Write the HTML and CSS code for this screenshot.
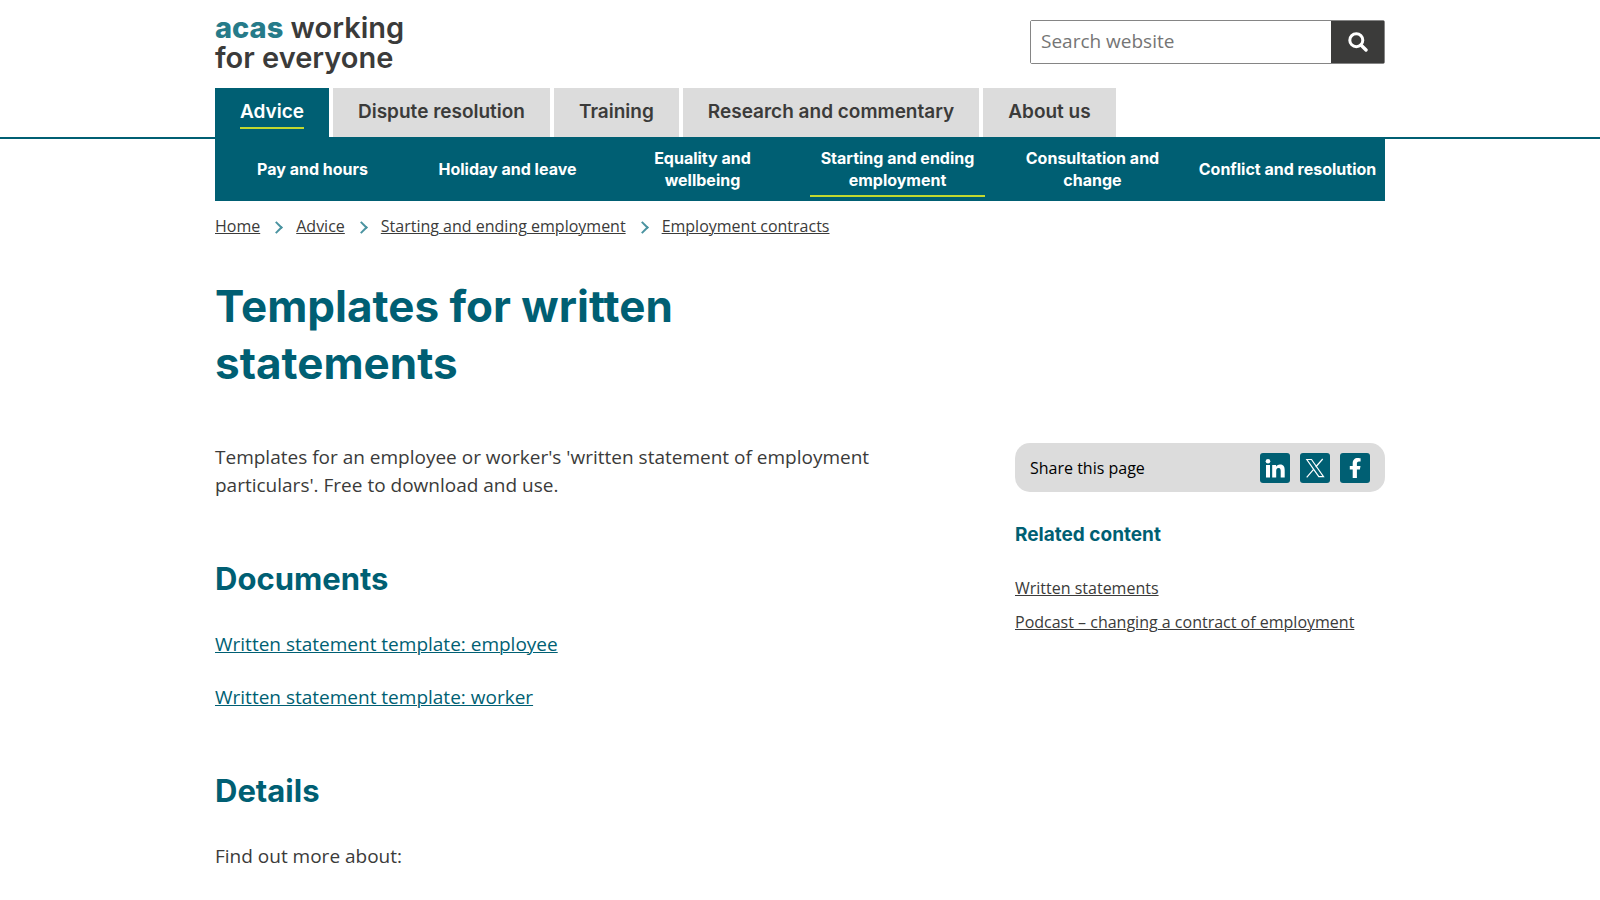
FILE: index.html
```html
<!DOCTYPE html>
<html lang="en">
  <head>
    <meta charset="UTF-8">
    <meta name="viewport" content="width=device-width, initial-scale=1.0">
    <title>Templates for written statements | Acas</title>
    <link rel="stylesheet" href="styles.css">
  </head>
  <body>
    <header class="site-header">
      <div class="container header-top">
        <a href="#" class="logo"><strong>acas</strong> working<br>for everyone</a>
        <form class="search" role="search">
          <input type="search" class="search-input" placeholder="Search website" aria-label="Search website">
          <button type="submit" class="search-button" aria-label="Search">
            <svg viewBox="0 0 20 20" width="20" height="20" fill="none" stroke="#fff">
              <circle cx="8.3" cy="8.2" r="6.5" stroke-width="3" />
              <path d="M13 13l5 5" stroke-width="3.4" stroke-linecap="round" />
            </svg>
          </button>
        </form>
      </div>

      <nav class="container tabs" aria-label="Main">
        <a href="#" class="tab active"><span>Advice</span></a>
        <a href="#" class="tab"><span>Dispute resolution</span></a>
        <a href="#" class="tab"><span>Training</span></a>
        <a href="#" class="tab"><span>Research and commentary</span></a>
        <a href="#" class="tab"><span>About us</span></a>
      </nav>
    </header>

    <nav class="container subnav" aria-label="Advice">
      <a href="#">Pay and hours</a>
      <a href="#">Holiday and leave</a>
      <a href="#">Equality and wellbeing</a>
      <a href="#" class="active">Starting and ending employment</a>
      <a href="#">Consultation and change</a>
      <a href="#">Conflict and resolution</a>
    </nav>

    <div class="container">
      <nav aria-label="Breadcrumb">
        <ol class="breadcrumb">
          <li><a href="#">Home</a></li>
          <li><a href="#">Advice</a></li>
          <li><a href="#">Starting and ending employment</a></li>
          <li><a href="#">Employment contracts</a></li>
        </ol>
      </nav>

      <h1>Templates for written statements</h1>

      <div class="columns">
        <main>
          <p>Templates for an employee or worker's 'written statement of employment particulars'. Free to download and use.</p>

          <h2>Documents</h2>
          <p><a href="#">Written statement template: employee</a></p>
          <p><a href="#">Written statement template: worker</a></p>

          <h2>Details</h2>
          <p>Find out more about:</p>
        </main>

        <aside>
          <div class="share">
            <span>Share this page</span>
            <div class="share-links">
              <a href="#" aria-label="Share on LinkedIn">
                <svg viewBox="0 0 30 30" width="30" height="30" fill="#fff">
                  <circle cx="8" cy="8.2" r="2.3" />
                  <path d="M6 12h4v12.500H6zM12.200 12H16v1.700c.6-1.100 2-2.100 4-2.100 3.900 0 4.700 2.500 4.700 5.900v7h-4v-6.200c0-1.500 0-3.400-2.100-3.400s-2.400 1.600-2.400 3.300v6.300h-4z" />
                </svg>
              </a>
              <a href="#" aria-label="Share on X">
                <svg viewBox="0 0 30 30" width="30" height="30" fill="none" stroke="#fff">
                  <path d="M6.800 6.500h4.700l12 17.200h-4.700zM22.700 6l-7 8M13.600 16.300l-6.900 8" stroke-width="1.200" />
                </svg>
              </a>
              <a href="#" aria-label="Share on Facebook">
                <svg viewBox="0 0 30 30" width="30" height="30" fill="#fff">
                  <path d="M12.700 25v-8.500H9.800V13h2.900v-2.800C12.700 7 14.600 5 17.700 5c1.400 0 2.900.3 2.900.3v3.200H19c-1.600 0-2.100 1-2.100 2V13h3.600l-.6 3.500h-3V25z" />
                </svg>
              </a>
            </div>
          </div>

          <h3>Related content</h3>
          <ul class="related">
            <li><a href="#">Written statements</a></li>
            <li><a href="#">Podcast – changing a contract of employment</a></li>
          </ul>
        </aside>
      </div>
    </div>
  </body>
</html>
```

FILE: styles.css
```css
* {
  box-sizing: border-box;
}

body {
  margin: 0;
  background: #fff;
  color: #3b3b3a;
  font-family: "Open Sans", sans-serif;
  font-size: 19px;
  line-height: 28px;
}

a {
  color: #005f73;
  text-underline-offset: 1px;
  text-decoration-thickness: 1px;
}

.container {
  width: 100%;
  max-width: 1170px;
  margin: 0 auto;
}

.site-header {
  border-bottom: 2px solid #005f73;
}

.header-top {
  display: flex;
  justify-content: space-between;
  align-items: flex-start;
  padding: 13px 0 15px;
}

.logo {
  color: #3b3b3a;
  font-family: Inter, sans-serif;
  font-size: 29px;
  font-weight: 600;
  line-height: 30px;
  text-decoration: none;
}

.logo strong {
  color: #267b89;
  font-weight: 800;
}

.search {
  display: flex;
  width: 355px;
  height: 44px;
  margin-top: 7px;
  border: 1px solid #858585;
  border-radius: 2px;
}

.search-input {
  flex: 1;
  min-width: 0;
  padding: 0 10px 2px;
  border: 0;
  background: #fff;
  color: #3b3b3a;
  font: inherit;
}

.search-input::placeholder {
  color: #757575;
}

.search-button {
  display: flex;
  align-items: center;
  justify-content: center;
  width: 53px;
  padding: 0;
  border: 0;
  background: #3b3b3a;
  cursor: pointer;
}

.tabs {
  display: flex;
  flex-wrap: wrap;
  gap: 4px;
}

.tab {
  padding: 8px 25px;
  background: #dcdcdc;
  color: #3b3b3a;
  font-family: Inter, sans-serif;
  font-weight: 600;
  text-decoration: none;
}

.tab span {
  display: block;
  height: 33px;
  line-height: 31px;
}

.tab.active {
  background: #005f73;
  color: #fff;
}

.tab.active span {
  border-bottom: 2px solid #c1d82f;
}

.subnav {
  display: grid;
  grid-template-columns: repeat(6, minmax(0, 1fr));
  background: #005f73;
}

.subnav a {
  display: flex;
  align-items: center;
  justify-content: center;
  margin: 4px 10px;
  padding: 4px 0;
  border-bottom: 2px solid transparent;
  color: #fff;
  font-family: Inter, sans-serif;
  font-size: 16px;
  font-weight: 700;
  line-height: 22px;
  text-align: center;
  text-decoration: none;
}

.subnav a.active {
  border-bottom-color: #c1d82f;
}

.subnav a:last-child {
  white-space: nowrap;
}

.breadcrumb {
  display: flex;
  flex-wrap: wrap;
  margin: 13px 0 0;
  padding: 0;
  font-size: 16px;
  line-height: 24px;
  list-style: none;
}

.breadcrumb li {
  display: flex;
  align-items: center;
}

.breadcrumb a {
  color: #3b3b3a;
}

/* chevron between the items */
.breadcrumb li + li::before {
  content: "";
  width: 7px;
  height: 7px;
  margin: 3px 15px 0 12px;
  border-top: 2px solid #4a93a0;
  border-right: 2px solid #4a93a0;
  transform: rotate(45deg);
}

h1,
h2,
h3 {
  color: #005f73;
  font-family: Inter, sans-serif;
  font-weight: 700;
}

h1 {
  max-width: 690px;
  margin: 40px 0 51px;
  font-size: 44px;
  line-height: 57px;
}

h2 {
  margin: 59px 0 30px;
  font-size: 31px;
  line-height: 42px;
}

h3 {
  margin: 29px 0 27px;
  font-size: 19px;
  line-height: 28px;
}

p {
  margin: 0 0 25px;
}

.columns {
  display: grid;
  grid-template-columns: minmax(0, 690px) 370px;
  justify-content: space-between;
}

.share {
  display: flex;
  align-items: center;
  justify-content: space-between;
  padding: 10px 15px 9px;
  border-radius: 15px;
  background: #dcdcdc;
  color: #000;
  font-size: 16px;
}

.share-links {
  display: flex;
  gap: 10px;
}

.share-links a {
  display: flex;
  border-radius: 3px;
  background: #005f73;
}

.related {
  margin: 0;
  padding: 0;
  font-size: 16px;
  line-height: 24px;
  list-style: none;
}

.related li {
  margin-bottom: 10px;
}

.related a {
  color: #3b3b3a;
}
```
